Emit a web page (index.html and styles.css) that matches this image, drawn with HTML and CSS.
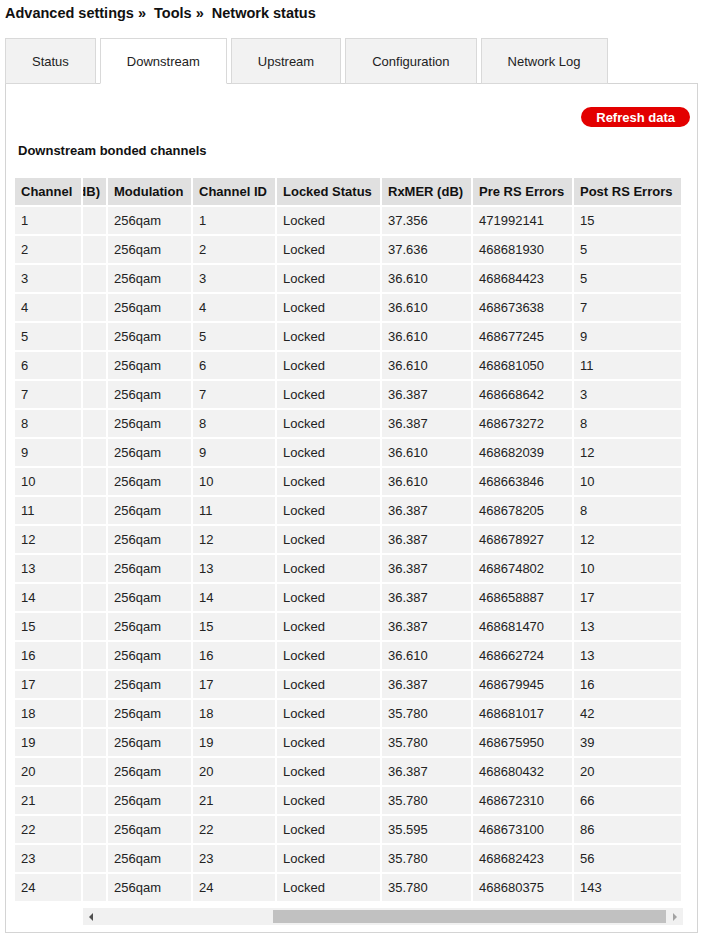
FILE: index.html
```html
<!DOCTYPE html>
<html lang="en">
<head>
  <meta charset="UTF-8" />
  <meta name="viewport" content="width=device-width, initial-scale=1" />
  <title>Network status</title>
  <link rel="stylesheet" href="styles.css">
</head>
<body>

  <h1 class="crumbs">Advanced settings &raquo;&nbsp; Tools &raquo;&nbsp; Network status</h1>

  <ul class="tabs">
    <li class="tab">Status</li>
    <li class="tab active">Downstream</li>
    <li class="tab">Upstream</li>
    <li class="tab">Configuration</li>
    <li class="tab">Network Log</li>
  </ul>

  <div class="panel">
    <div class="panel-actions">
      <button type="button" class="btn-refresh">Refresh data</button>
    </div>

    <h2 class="section-title">Downstream bonded channels</h2>

    <div class="channels">
      <!-- frozen first column -->
      <table class="ch-table">
        <tr><th class="col-channel">Channel</th></tr>
        <tr><td>1</td></tr>
        <tr><td>2</td></tr>
        <tr><td>3</td></tr>
        <tr><td>4</td></tr>
        <tr><td>5</td></tr>
        <tr><td>6</td></tr>
        <tr><td>7</td></tr>
        <tr><td>8</td></tr>
        <tr><td>9</td></tr>
        <tr><td>10</td></tr>
        <tr><td>11</td></tr>
        <tr><td>12</td></tr>
        <tr><td>13</td></tr>
        <tr><td>14</td></tr>
        <tr><td>15</td></tr>
        <tr><td>16</td></tr>
        <tr><td>17</td></tr>
        <tr><td>18</td></tr>
        <tr><td>19</td></tr>
        <tr><td>20</td></tr>
        <tr><td>21</td></tr>
        <tr><td>22</td></tr>
        <tr><td>23</td></tr>
        <tr><td>24</td></tr>
      </table>

      <div class="scroll-area">
        <div class="scroll-clip">
          <table class="ch-table">
            <tr>
              <th>Frequency (MHz)</th>
              <th>Power (dB)</th>
              <th class="col-mod">Modulation</th>
              <th class="col-id">Channel ID</th>
              <th class="col-lock">Locked Status</th>
              <th class="col-mer">RxMER (dB)</th>
              <th class="col-pre">Pre RS Errors</th>
              <th class="col-post">Post RS Errors</th>
            </tr>
            <tr><td>602</td><td></td><td>256qam</td><td>1</td><td>Locked</td><td>37.356</td><td>471992141</td><td>15</td></tr>
            <tr><td>610</td><td></td><td>256qam</td><td>2</td><td>Locked</td><td>37.636</td><td>468681930</td><td>5</td></tr>
            <tr><td>618</td><td></td><td>256qam</td><td>3</td><td>Locked</td><td>36.610</td><td>468684423</td><td>5</td></tr>
            <tr><td>626</td><td></td><td>256qam</td><td>4</td><td>Locked</td><td>36.610</td><td>468673638</td><td>7</td></tr>
            <tr><td>634</td><td></td><td>256qam</td><td>5</td><td>Locked</td><td>36.610</td><td>468677245</td><td>9</td></tr>
            <tr><td>642</td><td></td><td>256qam</td><td>6</td><td>Locked</td><td>36.610</td><td>468681050</td><td>11</td></tr>
            <tr><td>650</td><td></td><td>256qam</td><td>7</td><td>Locked</td><td>36.387</td><td>468668642</td><td>3</td></tr>
            <tr><td>658</td><td></td><td>256qam</td><td>8</td><td>Locked</td><td>36.387</td><td>468673272</td><td>8</td></tr>
            <tr><td>666</td><td></td><td>256qam</td><td>9</td><td>Locked</td><td>36.610</td><td>468682039</td><td>12</td></tr>
            <tr><td>674</td><td></td><td>256qam</td><td>10</td><td>Locked</td><td>36.610</td><td>468663846</td><td>10</td></tr>
            <tr><td>682</td><td></td><td>256qam</td><td>11</td><td>Locked</td><td>36.387</td><td>468678205</td><td>8</td></tr>
            <tr><td>690</td><td></td><td>256qam</td><td>12</td><td>Locked</td><td>36.387</td><td>468678927</td><td>12</td></tr>
            <tr><td>698</td><td></td><td>256qam</td><td>13</td><td>Locked</td><td>36.387</td><td>468674802</td><td>10</td></tr>
            <tr><td>706</td><td></td><td>256qam</td><td>14</td><td>Locked</td><td>36.387</td><td>468658887</td><td>17</td></tr>
            <tr><td>714</td><td></td><td>256qam</td><td>15</td><td>Locked</td><td>36.387</td><td>468681470</td><td>13</td></tr>
            <tr><td>722</td><td></td><td>256qam</td><td>16</td><td>Locked</td><td>36.610</td><td>468662724</td><td>13</td></tr>
            <tr><td>730</td><td></td><td>256qam</td><td>17</td><td>Locked</td><td>36.387</td><td>468679945</td><td>16</td></tr>
            <tr><td>738</td><td></td><td>256qam</td><td>18</td><td>Locked</td><td>35.780</td><td>468681017</td><td>42</td></tr>
            <tr><td>746</td><td></td><td>256qam</td><td>19</td><td>Locked</td><td>35.780</td><td>468675950</td><td>39</td></tr>
            <tr><td>754</td><td></td><td>256qam</td><td>20</td><td>Locked</td><td>36.387</td><td>468680432</td><td>20</td></tr>
            <tr><td>762</td><td></td><td>256qam</td><td>21</td><td>Locked</td><td>35.780</td><td>468672310</td><td>66</td></tr>
            <tr><td>770</td><td></td><td>256qam</td><td>22</td><td>Locked</td><td>35.595</td><td>468673100</td><td>86</td></tr>
            <tr><td>778</td><td></td><td>256qam</td><td>23</td><td>Locked</td><td>35.780</td><td>468682423</td><td>56</td></tr>
            <tr><td>786</td><td></td><td>256qam</td><td>24</td><td>Locked</td><td>35.780</td><td>468680375</td><td>143</td></tr>
          </table>
        </div>

        <!-- drawn scrollbar, scrolled to the far right -->
        <div class="scrollbar">
          <span class="sb-btn"><span class="arrow-left"></span></span>
          <span class="sb-thumb"></span>
          <span class="sb-btn"><span class="arrow-right"></span></span>
        </div>
      </div>
    </div>
  </div>

</body>
</html>
```

FILE: styles.css
```css
/* Global Styles */
* {
  margin: 0;
  padding: 0;
  box-sizing: border-box;
}

body {
  font-family: "Liberation Sans", Arial, sans-serif;
  font-size: 13px;
  background-color: #fff;
  color: #222;
  padding: 0 5px;
}

.crumbs {
  font-size: 14.5px;
  font-weight: bold;
  line-height: 18px;
  padding-top: 4px;
  color: #111;
}

/* Tabs */
.tabs {
  list-style: none;
  display: flex;
  gap: 4px;
  margin-top: 16px;
  position: relative;
  margin-bottom: -1px;
}

.tab {
  height: 46px;
  line-height: 46px;
  padding: 0 26px;
  background: #f2f2f2;
  border: 1px solid #d9d9d9;
  color: #222;
}

.tab.active {
  background: #fff;
  border-bottom-color: #fff;
}

/* Panel */
.panel {
  width: 693px;
  border: 1px solid #d4d4d4;
  padding: 23px 7px 7px 7px;
}

.panel-actions {
  display: flex;
  justify-content: flex-end;
}

.btn-refresh {
  height: 20px;
  padding: 0 15px;
  border: none;
  border-radius: 10px;
  background: #e30000;
  color: #fff;
  font-family: inherit;
  font-size: 13px;
  font-weight: bold;
  cursor: pointer;
}

.section-title {
  font-size: 13px;
  font-weight: bold;
  line-height: 15px;
  margin: 16px 0 18px;
  padding-left: 5px;
  color: #111;
}

/* Channel table */
.channels {
  display: flex;
  align-items: flex-start;
}

.ch-table {
  border-collapse: separate;
  border-spacing: 2px;
  white-space: nowrap;
}

.ch-table th,
.ch-table td {
  height: 27px;
  padding: 6px;
  line-height: 15px;
  text-align: left;
}

.ch-table th {
  background: #e0e0e0;
  font-weight: bold;
  color: #111;
}

.ch-table td {
  background: #f2f2f2;
}

.col-channel { width: 66px; }
.col-mod { width: 83px; }
.col-id { width: 82px; }
.col-lock { width: 103px; }
.col-mer { width: 89px; }
.col-pre { width: 99px; }
.col-post { width: 107px; }

.scroll-area {
  width: 600px;
}

.scroll-clip {
  overflow: hidden;
  direction: rtl; /* keeps the right end in view */
}

.scroll-clip .ch-table {
  direction: ltr;
  width: max-content;
}

.scrollbar {
  display: flex;
  height: 17px;
  margin-top: 5px;
  background: #f1f1f1;
}

.sb-btn {
  width: 17px;
  display: flex;
  align-items: center;
  justify-content: center;
}

.sb-btn:first-child {
  width: 15px;
}

.sb-thumb {
  margin: 2px 0 2px auto;
  width: 393px;
  background: #c1c1c1;
}

.arrow-left {
  border-top: 4px solid transparent;
  border-bottom: 4px solid transparent;
  border-right: 4px solid #505050;
}

.arrow-right {
  border-top: 4px solid transparent;
  border-bottom: 4px solid transparent;
  border-left: 4px solid #a3a3a3;
}
```
